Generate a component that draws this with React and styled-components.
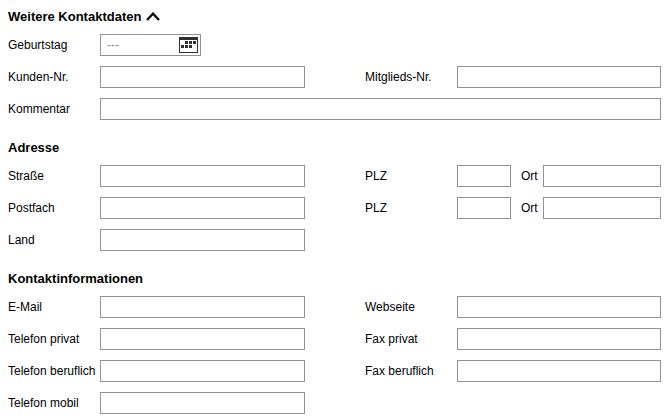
import React from "react";
import styled, { createGlobalStyle } from "styled-components";

const Global = createGlobalStyle`
  *{box-sizing:border-box}
  body{margin:0;background:#fff;color:#000;font:12px/22px "Liberation Sans",Arial,sans-serif}
`;
const Form = styled.form`padding:6px 6px 0 8px;width:667px;height:418px;overflow:hidden;`;
const Section = styled.section`margin-bottom:17px;`;
const Heading = styled.h2`
  display:flex;align-items:center;gap:5px;margin:0 0 7px;height:21px;
  font-size:13px;font-weight:bold;line-height:21px;
`;
const Rows = styled.div`display:grid;gap:10px;`;
const Row = styled.div`
  display:grid;height:22px;white-space:nowrap;
  grid-template-columns:${p => p.$wide ? "92px 561px" : "92px 205px 60px 92px 204px"};
`;
const Label = styled.label`grid-column:${p => p.$right ? 4 : "auto"};`;
const Input = styled.input`
  width:100%;height:22px;border:1px solid #919191;border-radius:0;background:#fff;padding:0 6px;margin:0;display:block;
  font:inherit;outline:none;
`;
const Place = styled.div`display:grid;grid-template-columns:54px 32px 118px;`;
const PlaceLabel = styled(Label)`padding-left:10px;`;
const DateBox = styled.div`
  display:flex;justify-content:space-between;align-items:center;width:101px;height:22px;
  border:1px solid #919191;padding:0 2px 0 6px;color:#8c8c8c;
`;
const ChevronIcon = styled.svg`display:block;`;
const CalendarIcon = styled.svg`display:block;`;

const Chevron = () => (
  <ChevronIcon width="14" height="9" viewBox="0 0 14 9"><path d="M1 8 7 1.6 13 8" fill="none" stroke="#111" strokeWidth="2.4" /></ChevronIcon>
);
const Calendar = () => (
  <CalendarIcon width="19" height="16" viewBox="0 0 19 16" shapeRendering="crispEdges">
    <path d="M0 0h19v16H0zM1 3v12h17V3z" fill="#303030" fillRule="evenodd" />
    <path d="M6 4h3v3H6zM10 4h3v3h-3zM14 4h3v3h-3zM2 8h3v3H2zM6 8h3v3H6zM10 8h3v3h-3z" fill="#303030" />
  </CalendarIcon>
);
const Pair = ({ left, right, place }) => (
  <Row>
    <Label>{left}</Label><Input aria-label={left} />
    {right && <Label $right>{right}</Label>}
    {right && (place ? <Place><Input aria-label={right} /><PlaceLabel>Ort</PlaceLabel><Input aria-label="Ort" /></Place> : <Input aria-label={right} />)}
  </Row>
);

export default function App() {
  return (
    <>
      <Global />
      <Form>
        <Section>
          <Heading>Weitere Kontaktdaten<Chevron /></Heading>
          <Rows>
            <Row><Label>Geburtstag</Label><DateBox><span>---</span><Calendar /></DateBox></Row>
            <Pair left="Kunden-Nr." right="Mitglieds-Nr." />
            <Row $wide><Label>Kommentar</Label><Input aria-label="Kommentar" /></Row>
          </Rows>
        </Section>
        <Section>
          <Heading>Adresse</Heading>
          <Rows>
            <Pair left="Straße" right="PLZ" place />
            <Pair left="Postfach" right="PLZ" place />
            <Pair left="Land" />
          </Rows>
        </Section>
        <Section>
          <Heading>Kontaktinformationen</Heading>
          <Rows>
            <Pair left="E-Mail" right="Webseite" />
            <Pair left="Telefon privat" right="Fax privat" />
            <Pair left="Telefon beruflich" right="Fax beruflich" />
            <Pair left="Telefon mobil" />
          </Rows>
        </Section>
      </Form>
    </>
  );
}
